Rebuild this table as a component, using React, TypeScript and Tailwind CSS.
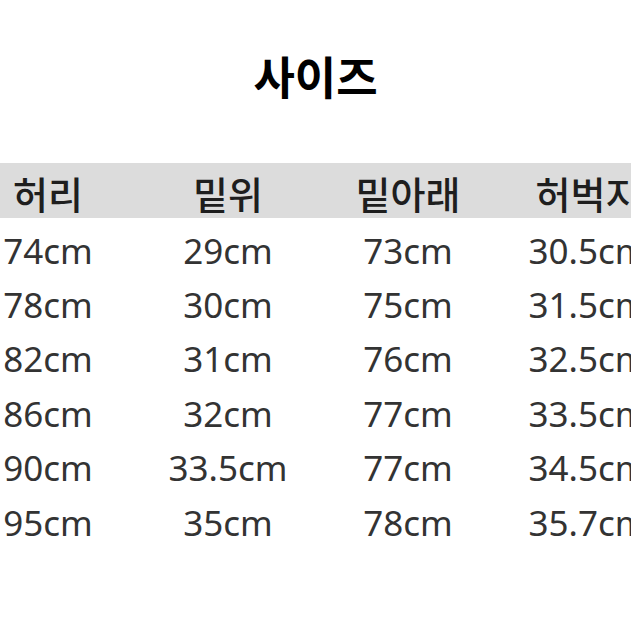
import React from "react";

const rows = [
  ["74cm", "29cm", "73cm", "30.5cm"],
  ["78cm", "30cm", "75cm", "31.5cm"],
  ["82cm", "31cm", "76cm", "32.5cm"],
  ["86cm", "32cm", "77cm", "33.5cm"],
  ["90cm", "33.5cm", "77cm", "34.5cm"],
  ["95cm", "35cm", "78cm", "35.7cm"],
];

const headers = ["허리", "밑위", "밑아래", "허벅지"];

const font = { fontFamily: '"Noto Sans", "Noto Sans CJK KR", sans-serif' };
const kfont = { fontFamily: '"Noto Sans CJK KR", "Noto Sans", sans-serif' };

export default function App() {
  return (
    <div className="w-[631px] h-[631px] overflow-hidden bg-white">
      <h1
        className="pt-[46px] h-[163px] text-center text-[45px] leading-[60px] font-bold text-black"
        style={kfont}
      >
        사이즈
      </h1>
      <div className="ml-[-42px] w-[720px]">
        <div className="grid grid-cols-4 h-[55px] bg-[#dcdcdc]">
          {headers.map((h) => (
            <div
              key={h}
              className="flex items-center justify-center text-[38px] leading-none font-medium text-[#1e1e1e] pt-[4px]"
              style={kfont}
            >
              {h}
            </div>
          ))}
        </div>
        <div className="pt-[5px]">
          {rows.map((r, i) => (
            <div key={i} className="grid grid-cols-4 h-[54.4px]">
              {r.map((c, j) => (
                <div
                  key={j}
                  className="flex items-center justify-center text-[35px] leading-none text-[#333333]"
                  style={font}
                >
                  {c}
                </div>
              ))}
            </div>
          ))}
        </div>
      </div>
    </div>
  );
}
